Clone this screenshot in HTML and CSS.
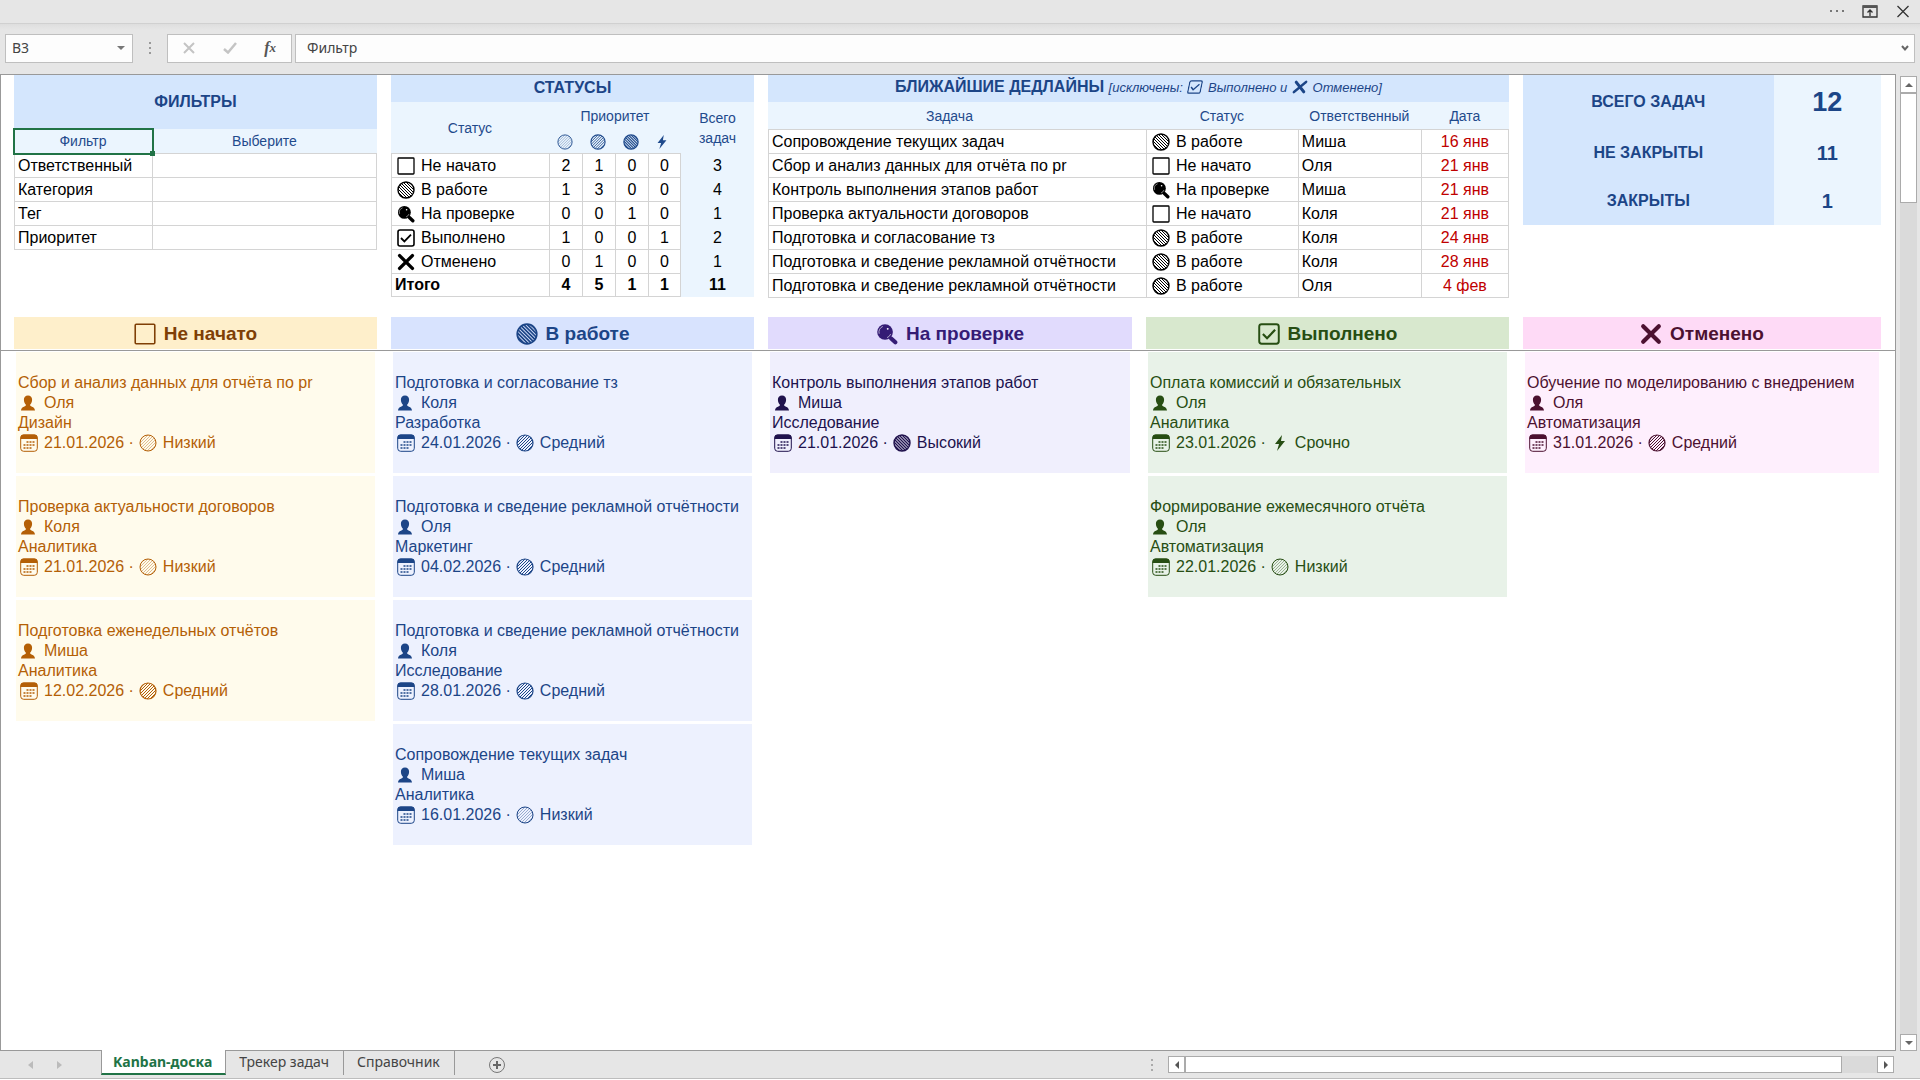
FILE: index.html
```html
<!DOCTYPE html>
<html lang="ru">
<head>
<meta charset="utf-8">
<title>Kanban-доска</title>
<meta name="viewport" content="width=device-width, initial-scale=1">
<link rel="stylesheet" href="styles.css">
</head>
<body>
<svg class="sprite" aria-hidden="true">
  <defs>
    <clipPath id="disc"><circle cx="9" cy="9" r="8"/></clipPath>
    <path id="lines" clip-path="url(#disc)" fill="none" stroke="currentColor" d="M0 4L4 0M0 7L7 0M0 10L10 0M0 13L13 0M0 16L16 0M1 18L18 1M4 18L18 4M7 18L18 7M10 18L18 10M13 18L18 13M16 18L18 16"/>
    <symbol id="low" viewBox="0 0 18 18"><g opacity=".4"><use href="#lines"/></g><circle cx="9" cy="9" r="8" fill="none" stroke="currentColor"/></symbol>
    <symbol id="mid" viewBox="0 0 18 18"><use href="#lines"/><circle cx="9" cy="9" r="8" fill="none" stroke="currentColor" stroke-width="1.2"/></symbol>
    <symbol id="high" viewBox="0 0 18 18"><g transform="matrix(-1 0 0 1 18 0)"><use href="#lines"/></g><circle cx="9" cy="9" r="8" fill="none" stroke="currentColor" stroke-width="1.4"/></symbol>
    <symbol id="bolt" viewBox="0 0 18 18"><path fill="currentColor" d="M11 1 4 10h4L6 17l8-10H10Z"/></symbol>
    <symbol id="box" viewBox="0 0 18 18"><rect x="1" y="1" width="16" height="16" rx=".8" fill="none" stroke="currentColor" stroke-width="1.3"/></symbol>
    <symbol id="lens" viewBox="0 0 18 18"><circle cx="7.4" cy="7.4" r="6.4" fill="currentColor"/><path fill="none" stroke="currentColor" stroke-width="3.4" stroke-linecap="round" d="m12.4 12.6 3.4 3.2"/><path fill="none" stroke="#fff" stroke-width=".8" opacity=".6" d="M2.6 8.8a5 5 0 0 1 3-6M12 9a5 5 0 0 1-3 3"/><circle cx="9.6" cy="4.8" r=".8" fill="#fff"/></symbol>
    <symbol id="check" viewBox="0 0 18 18"><rect x="1" y="1" width="16" height="16" rx="2" fill="none" stroke="currentColor" stroke-width="1.6"/><path fill="none" stroke="currentColor" stroke-width="1.8" d="m4 9 3.4 3.4L14 5.6"/></symbol>
    <symbol id="cross" viewBox="0 0 18 18"><path fill="none" stroke="currentColor" stroke-width="3.4" stroke-linecap="round" d="m2.6 2.6 12.8 12.8M15.4 2.6 2.6 15.400"/></symbol>
    <symbol id="user" viewBox="0 0 18 18"><path fill="currentColor" d="M8 1.500c2.600 0 4.100 1.700 4.100 4.200 0 2-.8 3.800-1.900 4.900v1c.8 1.300 4.400 1.300 4.800 4.900H1c.4-3.600 4-3.600 4.800-4.900v-1C4.700 9.500 3.900 7.700 3.900 5.700 3.900 3.200 5.400 1.500 8 1.500Z"/></symbol>
    <symbol id="date" viewBox="0 0 18 18"><rect x=".7" y="1" width="16.600" height="16.300" rx="3" fill="none" stroke="currentColor"/><path fill="currentColor" d="M.5 5V3.500a3 3 0 0 1 3-3h11a3 3 0 0 1 3 3V5Z"/><path fill="none" stroke="currentColor" stroke-width="2" opacity=".75" stroke-dasharray="2 1" d="M6.500 8h8M3.500 11h11M3.500 14h8"/></symbol>
  </defs>
</svg>

<div class="app">
  <header class="titlebar">
    <button class="plain" aria-label="Ещё"><svg width="16" height="16"><g fill="#777"><path d="M1 7h2v2H1zM7 7h2v2H7zM13 7h2v2h-2z"/></g></svg></button>
    <button class="plain" aria-label="Параметры отображения ленты"><svg width="16" height="16"><path fill="none" stroke="#333" stroke-width="1.300" d="M1 3h14v11H1ZM8 13V7M5.500 9.500 8 7 10.500 9.500"/><path stroke="#555" stroke-width="2" d="M1 4h14"/></svg></button>
    <button class="plain" aria-label="Закрыть"><svg width="16" height="16"><path stroke="#333" stroke-width="1.300" d="m2.500 3 11 11M13.500 3l-11 11"/></svg></button>
  </header>

  <div class="formula">
    <div class="field namebox">
      <input aria-label="Имя ячейки" value="B3">
      <button class="plain" aria-label="Список имён"><svg width="8" height="4"><path fill="#777" d="M0 0h8L4 4z"/></svg></button>
    </div>
    <svg class="grip" width="4" height="12"><path fill="#999" d="M1 0h2v2H1zM1 5h2v2H1zM1 10h2v2H1z"/></svg>
    <div class="field tools">
      <button class="plain" aria-label="Отмена"><svg width="12" height="12"><path stroke="#c4c4c4" stroke-width="2" d="m1 1 10 10M11 1 1 11"/></svg></button>
      <button class="plain" aria-label="Ввод"><svg width="14" height="12"><path fill="none" stroke="#c4c4c4" stroke-width="2.500" d="m1 7 4 3.500L13 1"/></svg></button>
      <button class="plain fx" aria-label="Вставить функцию">f<small>x</small></button>
    </div>
    <div class="field entry">
      <input aria-label="Строка формул" value="Фильтр">
      <button class="plain" aria-label="Развернуть строку формул"><svg width="8" height="7"><path fill="none" stroke="#666" stroke-width="2" d="m1 1 3 3.500L7 1"/></svg></button>
    </div>
  </div>

  <div class="work">
    <main class="sheet">
      <section class="frozen">
        <div class="columns summary">
          <table class="filters">
            <colgroup><col class="f1"><col></colgroup>
            <thead>
              <tr class="tall"><th colspan="2" class="title">ФИЛЬТРЫ</th></tr>
              <tr><th class="selected">Фильтр</th><th>Выберите</th></tr>
            </thead>
            <tbody>
              <tr><td>Ответственный</td><td></td></tr>
              <tr><td>Категория</td><td></td></tr>
              <tr><td>Тег</td><td></td></tr>
              <tr><td>Приоритет</td><td></td></tr>
            </tbody>
          </table>

          <table class="statuses">
            <colgroup><col class="s1"><col class="s2"><col class="s2"><col class="s2"><col class="s2"><col></colgroup>
            <thead>
              <tr class="head"><th colspan="6" class="title">СТАТУСЫ</th></tr>
              <tr class="head"><th rowspan="2">Статус</th><th colspan="4">Приоритет</th><th rowspan="2">Всего<br>задач</th></tr>
              <tr>
                <th><svg class="dot"><use href="#low"/></svg></th>
                <th><svg class="dot"><use href="#mid"/></svg></th>
                <th><svg class="dot strong"><use href="#high"/></svg></th>
                <th><svg class="dot urgent"><use href="#bolt"/></svg></th>
              </tr>
            </thead>
            <tbody>
              <tr><td><span class="tag"><svg class="icon"><use href="#box"/></svg>Не начато</span></td><td>2</td><td>1</td><td>0</td><td>0</td><td class="sum">3</td></tr>
              <tr><td><span class="tag"><svg class="icon"><use href="#high"/></svg>В работе</span></td><td>1</td><td>3</td><td>0</td><td>0</td><td class="sum">4</td></tr>
              <tr><td><span class="tag"><svg class="icon"><use href="#lens"/></svg>На проверке</span></td><td>0</td><td>0</td><td>1</td><td>0</td><td class="sum">1</td></tr>
              <tr><td><span class="tag"><svg class="icon"><use href="#check"/></svg>Выполнено</span></td><td>1</td><td>0</td><td>0</td><td>1</td><td class="sum">2</td></tr>
              <tr><td><span class="tag"><svg class="icon"><use href="#cross"/></svg>Отменено</span></td><td>0</td><td>1</td><td>0</td><td>0</td><td class="sum">1</td></tr>
              <tr class="total"><td>Итого</td><td>4</td><td>5</td><td>1</td><td>1</td><td class="sum">11</td></tr>
            </tbody>
          </table>

          <table class="deadlines">
            <colgroup><col class="d1"><col class="d2"><col class="d3"><col></colgroup>
            <thead>
              <tr class="head"><th colspan="4" class="title">БЛИЖАЙШИЕ ДЕДЛАЙНЫ <em>[исключены: <svg class="mini"><use href="#check"/></svg> Выполнено и <svg class="mini"><use href="#cross"/></svg> Отменено]</em></th></tr>
              <tr class="head"><th class="task">Задача</th><th>Статус</th><th>Ответственный</th><th>Дата</th></tr>
            </thead>
            <tbody>
              <tr><td>Сопровождение текущих задач</td><td><span class="tag"><svg class="icon"><use href="#high"/></svg>В работе</span></td><td>Миша</td><td class="due">16 янв</td></tr>
              <tr><td>Сбор и анализ данных для отчёта по pr</td><td><span class="tag"><svg class="icon"><use href="#box"/></svg>Не начато</span></td><td>Оля</td><td class="due">21 янв</td></tr>
              <tr><td>Контроль выполнения этапов работ</td><td><span class="tag"><svg class="icon"><use href="#lens"/></svg>На проверке</span></td><td>Миша</td><td class="due">21 янв</td></tr>
              <tr><td>Проверка актуальности договоров</td><td><span class="tag"><svg class="icon"><use href="#box"/></svg>Не начато</span></td><td>Коля</td><td class="due">21 янв</td></tr>
              <tr><td>Подготовка и согласование тз</td><td><span class="tag"><svg class="icon"><use href="#high"/></svg>В работе</span></td><td>Коля</td><td class="due">24 янв</td></tr>
              <tr><td>Подготовка и сведение рекламной отчётности</td><td><span class="tag"><svg class="icon"><use href="#high"/></svg>В работе</span></td><td>Коля</td><td class="due">28 янв</td></tr>
              <tr><td>Подготовка и сведение рекламной отчётности</td><td><span class="tag"><svg class="icon"><use href="#high"/></svg>В работе</span></td><td>Оля</td><td class="due">4 фев</td></tr>
            </tbody>
          </table>

          <table class="counts">
            <colgroup><col class="c1"><col></colgroup>
            <tbody>
              <tr class="tall"><th>ВСЕГО ЗАДАЧ</th><td class="big">12</td></tr>
              <tr><th>НЕ ЗАКРЫТЫ</th><td>11</td></tr>
              <tr><th>ЗАКРЫТЫ</th><td>1</td></tr>
            </tbody>
          </table>
        </div>

        <div class="columns heads">
          <h2 class="amber"><svg><use href="#box"/></svg>Не начато</h2>
          <h2 class="blue strong"><svg><use href="#high"/></svg>В работе</h2>
          <h2 class="violet"><svg><use href="#lens"/></svg>На проверке</h2>
          <h2 class="green"><svg><use href="#check"/></svg>Выполнено</h2>
          <h2 class="pink"><svg><use href="#cross"/></svg>Отменено</h2>
        </div>
      </section>

      <section class="columns board">
        <div class="lane amber">
          <article><p>Сбор и анализ данных для отчёта по pr</p><p><svg class="icon"><use href="#user"/></svg>Оля</p><p>Дизайн</p><p><svg class="icon"><use href="#date"/></svg>21.01.2026 ·<svg class="icon prio"><use href="#low"/></svg>Низкий</p></article>
          <article><p>Проверка актуальности договоров</p><p><svg class="icon"><use href="#user"/></svg>Коля</p><p>Аналитика</p><p><svg class="icon"><use href="#date"/></svg>21.01.2026 ·<svg class="icon prio"><use href="#low"/></svg>Низкий</p></article>
          <article><p>Подготовка еженедельных отчётов</p><p><svg class="icon"><use href="#user"/></svg>Миша</p><p>Аналитика</p><p><svg class="icon"><use href="#date"/></svg>12.02.2026 ·<svg class="icon prio"><use href="#mid"/></svg>Средний</p></article>
        </div>
        <div class="lane blue">
          <article><p>Подготовка и согласование тз</p><p><svg class="icon"><use href="#user"/></svg>Коля</p><p>Разработка</p><p><svg class="icon"><use href="#date"/></svg>24.01.2026 ·<svg class="icon prio"><use href="#mid"/></svg>Средний</p></article>
          <article><p>Подготовка и сведение рекламной отчётности</p><p><svg class="icon"><use href="#user"/></svg>Оля</p><p>Маркетинг</p><p><svg class="icon"><use href="#date"/></svg>04.02.2026 ·<svg class="icon prio"><use href="#mid"/></svg>Средний</p></article>
          <article><p>Подготовка и сведение рекламной отчётности</p><p><svg class="icon"><use href="#user"/></svg>Коля</p><p>Исследование</p><p><svg class="icon"><use href="#date"/></svg>28.01.2026 ·<svg class="icon prio"><use href="#mid"/></svg>Средний</p></article>
          <article><p>Сопровождение текущих задач</p><p><svg class="icon"><use href="#user"/></svg>Миша</p><p>Аналитика</p><p><svg class="icon"><use href="#date"/></svg>16.01.2026 ·<svg class="icon prio"><use href="#low"/></svg>Низкий</p></article>
        </div>
        <div class="lane violet">
          <article><p>Контроль выполнения этапов работ</p><p><svg class="icon"><use href="#user"/></svg>Миша</p><p>Исследование</p><p><svg class="icon"><use href="#date"/></svg>21.01.2026 ·<svg class="icon prio strong"><use href="#high"/></svg>Высокий</p></article>
        </div>
        <div class="lane green">
          <article><p>Оплата комиссий и обязательных</p><p><svg class="icon"><use href="#user"/></svg>Оля</p><p>Аналитика</p><p><svg class="icon"><use href="#date"/></svg>23.01.2026 ·<svg class="icon prio"><use href="#bolt"/></svg>Срочно</p></article>
          <article><p>Формирование ежемесячного отчёта</p><p><svg class="icon"><use href="#user"/></svg>Оля</p><p>Автоматизация</p><p><svg class="icon"><use href="#date"/></svg>22.01.2026 ·<svg class="icon prio"><use href="#low"/></svg>Низкий</p></article>
        </div>
        <div class="lane pink">
          <article><p>Обучение по моделированию с внедрением</p><p><svg class="icon"><use href="#user"/></svg>Оля</p><p>Автоматизация</p><p><svg class="icon"><use href="#date"/></svg>31.01.2026 ·<svg class="icon prio"><use href="#mid"/></svg>Средний</p></article>
        </div>
      </section>
    </main>

    <div class="vscroll">
      <button class="step" aria-label="Вверх"><svg width="8" height="4"><path fill="#666" d="M0 4h8L4 0z"/></svg></button>
      <div class="track"><div class="thumb"></div></div>
      <button class="step" aria-label="Вниз"><svg width="8" height="4"><path fill="#666" d="M0 0h8L4 4z"/></svg></button>
    </div>
  </div>

  <footer class="tabbar">
    <div class="arrows">
      <button class="plain" aria-label="Предыдущий лист"><svg width="5" height="8"><path fill="#bbb" d="M5 0v8L0 4z"/></svg></button>
      <button class="plain" aria-label="Следующий лист"><svg width="5" height="8"><path fill="#bbb" d="M0 0v8l5-4z"/></svg></button>
    </div>
    <nav class="tabs">
      <a class="tab active" href="#kanban">Kanban-доска</a>
      <a class="tab" href="#tracker">Трекер задач</a>
      <a class="tab" href="#reference">Справочник</a>
    </nav>
    <button class="plain add" aria-label="Новый лист"><svg width="18" height="18"><circle cx="9" cy="9" r="7.500" fill="none" stroke="#777"/><path stroke="#666" stroke-width="2" d="M9 5v8M5 9h8"/></svg></button>
    <svg class="grip" width="4" height="12"><path fill="#aaa" d="M1 0h2v2H1zM1 5h2v2H1zM1 10h2v2H1z"/></svg>
    <div class="hscroll">
      <button class="step" aria-label="Влево"><svg width="4" height="8"><path fill="#555" d="M4 0v8L0 4z"/></svg></button>
      <div class="track"><div class="thumb"></div></div>
      <button class="step" aria-label="Вправо"><svg width="4" height="8"><path fill="#555" d="M0 0v8l4-4z"/></svg></button>
    </div>
  </footer>
</div>
</body>
</html>
```
FILE: styles.css
```css
* { box-sizing: border-box; }

body {
  margin: 0;
  background: #fff;
  font: 16px/20px "Liberation Sans", Arial, sans-serif;
  color: #000;
}

.sprite { position: absolute; width: 0; height: 0; }

.app {
  display: flex;
  flex-direction: column;
  min-height: 100vh;
  background: #e6e6e6;
  border-bottom: 1px solid #fff;
}

.plain {
  display: flex;
  align-items: center;
  justify-content: center;
  padding: 0;
  border: 0;
  background: none;
}

/* window chrome */
.titlebar {
  display: flex;
  align-items: center;
  justify-content: flex-end;
  gap: 17px;
  height: 24px;
  padding: 0 9px 2px;
  border-bottom: 1px solid #d0d0d0;
}

.formula {
  display: flex;
  align-items: center;
  height: 50px;
  padding: 0 5px 2px;
  background: linear-gradient(#dedede, #e6e6e6 6px);
}

.field {
  display: flex;
  align-items: center;
  height: 29px;
  background: #fdfdfd;
  border: 1px solid #bfbfbf;
}

.field input {
  flex: 1;
  min-width: 0;
  padding: 0;
  border: 0;
  outline: 0;
  background: none;
  color: #444;
  font: 14px/20px "Noto Sans", sans-serif;
}

.namebox { width: 128px; padding: 0 7px 0 6px; }
.formula .grip { margin: 0 15px; }
.tools { width: 125px; justify-content: space-between; padding: 0 15px; margin-right: 3px; }
.entry { flex: 1; padding: 0 5px 0 11px; }
.fx { font: italic bold 16px/20px "Liberation Serif", serif; color: #555; }
.fx small { font-size: 13px; }

.work { display: flex; flex: 1; }

.sheet {
  flex: 1;
  min-width: 0;
  background: #fff;
  border: 1px solid #999;
}

.columns {
  display: grid;
  grid-template-columns: 363fr 363fr 364fr 363fr 358fr;
  gap: 0 14px;
  padding: 0 14px 0 13px;
}

.frozen { border-bottom: 1px solid #999; padding-bottom: 1px; }
.summary { align-items: start; }
.deadlines { grid-column: span 2; }

/* tables */
table {
  width: 100%;
  table-layout: fixed;
  border-spacing: 0;
}

tr { height: 24px; }
.head { height: 27px; }
.tall { height: 54px; }

th, td { padding: 0 3px; }

th {
  background: #ebf5fe;
  color: #1f4a8c;
  font-size: 14px;
  font-weight: normal;
}

th.title, .counts th {
  background: #d4e6fd;
  color: #1c4587;
  font-size: 16px;
  font-weight: bold;
}

.head th.title { padding-bottom: 2px; }
.title em { font-size: 13px; font-weight: normal; }
th.task { padding-right: 18px; }

.filters td, .statuses td, .deadlines td {
  padding-top: 1px;
  border: solid #d4d4d4;
  border-width: 1px 0 0 1px;
  white-space: nowrap;
  line-height: 22px;
}

.filters td:last-child, .deadlines td:last-child, .statuses td:nth-last-child(2) { border-right-width: 1px; }
tbody tr:last-child td { border-bottom-width: 1px; }

.statuses td:not(:first-child), .deadlines .due { text-align: center; }
.statuses .sum { border: 0; background: #ebf5fe; }
.deadlines .due { color: #c00000; }
.statuses .total td { padding-top: 0; font-weight: bold; }

.f1 { width: 38%; }
.s1 { width: 43.5%; }
.s2 { width: 9.1%; }
.d1 { width: 51%; }
.d2 { width: 20.5%; }
.d3 { width: 16.6%; }
.c1 { width: 70%; }

.selected { position: relative; }

.selected::before {
  content: "";
  position: absolute;
  inset: -1px -2px -2px -1px;
  border: 2px solid #217346;
}

.selected::after {
  content: "";
  position: absolute;
  right: -3px;
  bottom: -3px;
  width: 5px;
  height: 5px;
  background: #217346;
}

.counts tr { height: 48px; }
.counts .tall { height: 54px; }
.counts td {
  background: #ebf5fe;
  color: #1c4587;
  font-size: 20px;
  font-weight: bold;
  text-align: center;
}
.counts .big { font-size: 27px; }

/* icons */
.icon, .dot, .mini { overflow: visible; }
.icon { flex: none; width: 18px; height: 18px; margin: 0 6px 0 2px; }
.prio { margin-left: 5px; }
.dot { display: block; width: 16px; height: 16px; margin: 2px auto 0; }
.urgent { margin-left: 3px; }
.mini { width: 14px; height: 14px; margin: 0 2px; vertical-align: -2px; transform: skewX(-12deg); }
.tag { display: flex; align-items: center; }
#lines { stroke-width: var(--hatch, 1px); }
.strong { --hatch: 1.400px; }
.dot.strong { --hatch: 1.300px; }

/* kanban */
.heads { margin-top: 19px; }

h2 {
  display: flex;
  align-items: center;
  justify-content: center;
  gap: 8px;
  height: 32px;
  margin: 0;
  padding-top: 2px;
  font-size: 19px;
  line-height: 24px;
}

h2 svg { width: 22px; height: 22px; }

h2.amber { background: #feefcb; color: #7f3f06; }
h2.blue { background: #d8e3fe; color: #1c4587; }
h2.violet { background: #e1dbfd; color: #351c75; }
h2.green { background: #d8e8ce; color: #274e13; }
h2.pink { background: #fedaf6; color: #4c1130; }

.board { padding-top: 1px; }
.lane { padding: 0 2px; }

article {
  padding: 21px 2px 19px;
  height: 121px;
  margin-bottom: 3px;
  white-space: nowrap;
}

article p { display: flex; align-items: center; margin: 0; }

.amber article { background: #fffbec; color: #b45f06; }
.blue article { background: #edf1fe; color: #1c4587; }
.violet article { background: #f0effd; color: #20124d; }
.green article { background: #e8f2e8; color: #274e13; }
.pink article { background: #feeffd; color: #4c1130; }

/* scrollbars */
.vscroll {
  display: flex;
  flex-direction: column;
  width: 24px;
  padding: 2px 3px 0 4px;
}

.step {
  display: flex;
  align-items: center;
  justify-content: center;
  flex: none;
  width: 17px;
  height: 17px;
  padding: 0;
  border: 1px solid #ababab;
  background: #fff;
}

.track { flex: 1; background: #dadada; }
.thumb { background: #fff; border: 1px solid #ababab; }
.vscroll .thumb { height: 110px; }
.hscroll { display: flex; width: 726px; margin-right: 26px; }
.hscroll .thumb { width: 95%; height: 17px; }

/* sheet tabs */
.tabbar {
  display: flex;
  align-items: center;
  height: 28px;
  border-bottom: 1px solid #bdbdbd;
}

.arrows { display: flex; gap: 24px; width: 101px; padding-left: 28px; }
.tabs { display: flex; align-self: flex-start; margin-top: -1px; }

.tab {
  height: 25px;
  padding: 2px 14px 0 13px;
  color: #444;
  font: 14px/20px "Noto Sans", sans-serif;
  text-decoration: none;
  border-right: 1px solid #999;
}

.tab.active {
  padding: 2px 13px 0 11px;
  background: #fff;
  color: #217346;
  font-weight: bold;
  border: solid #999;
  border-width: 0 1px;
  border-bottom: 2px solid #217346;
}

.add { margin: 0 auto 0 33px; }
.tabbar .grip { margin-right: 14px; }
```
